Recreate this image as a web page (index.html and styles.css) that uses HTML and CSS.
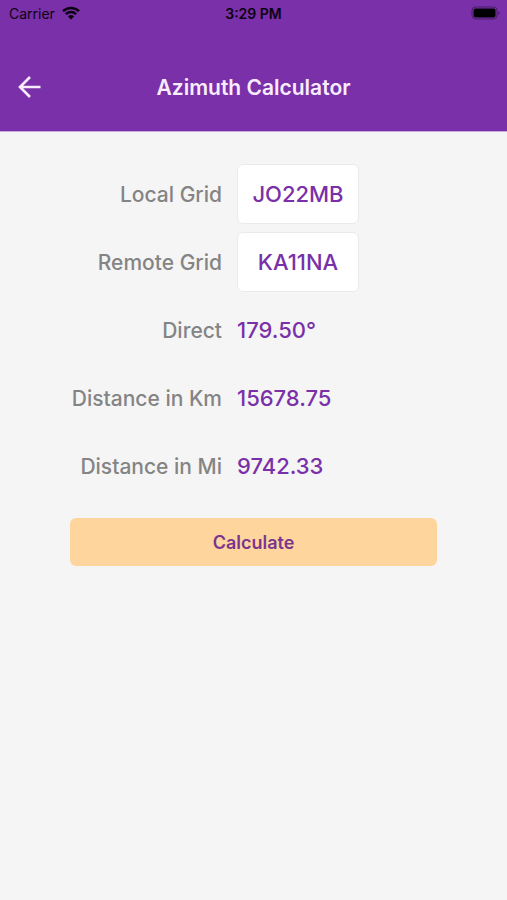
FILE: index.html
```html
<!DOCTYPE html>
<html lang="en">
<head>
<meta charset="utf-8">
<meta name="viewport" content="width=device-width, initial-scale=1">
<title>Azimuth Calculator</title>
<link rel="stylesheet" href="styles.css">
</head>
<body>
<header class="header">
  <div class="status">
    <div class="carrier">
      <span>Carrier</span>
      <svg class="wifi" viewBox="0 0 18 14" aria-hidden="true">
        <path d="M1 5.2a11.5 11.5 0 0 1 16 0M3.8 8.1a7.5 7.5 0 0 1 10.4 0" fill="none" stroke="currentColor" stroke-width="2.4"/>
        <path d="M9 13.6 5.9 10.5a4.5 4.5 0 0 1 6.2 0z" fill="currentColor"/>
      </svg>
    </div>
    <span class="time">3:29 PM</span>
    <svg class="battery" viewBox="0 0 30 14" aria-hidden="true">
      <rect x="1" y="1" width="25" height="12" rx="3.5" fill="none" stroke="currentColor" stroke-opacity=".4"/>
      <rect x="2.5" y="2.5" width="22" height="9" rx="2" fill="currentColor"/>
      <path d="M27.5 5.2a2 2 0 0 1 0 3.6z" fill="currentColor" fill-opacity=".5"/>
    </svg>
  </div>
  <nav class="nav">
    <a class="back" href="#" aria-label="Back">
      <svg viewBox="0 0 24 24" aria-hidden="true">
        <path d="M22.5 11H2M12 1 2 11l10 10" fill="none" stroke="currentColor" stroke-width="2.6"/>
      </svg>
    </a>
    <h1 class="title">Azimuth Calculator</h1>
  </nav>
</header>
<main class="main">
  <form class="form">
    <label class="label" for="local">Local Grid</label>
    <input class="field" id="local" type="text" value="JO22MB">
    <label class="label" for="remote">Remote Grid</label>
    <input class="field" id="remote" type="text" value="KA11NA">
    <label class="label" for="direct">Direct</label>
    <output class="value" id="direct">179.50°</output>
    <label class="label" for="km">Distance in Km</label>
    <output class="value" id="km">15678.75</output>
    <label class="label" for="mi">Distance in Mi</label>
    <output class="value" id="mi">9742.33</output>
    <button class="calculate" type="button">Calculate</button>
  </form>
</main>
</body>
</html>
```
FILE: styles.css
```css
* {
  box-sizing: border-box;
}

body {
  margin: 0;
  min-height: 100vh;
  background: #f5f5f5;
  font-family: Inter, "Liberation Sans", sans-serif;
}

.header {
  background: #7930a8;
  border-bottom: 1px solid #c9a8dd;
}

.status {
  display: grid;
  grid-template-columns: 1fr auto 1fr;
  align-items: center;
  height: 26px;
  padding: 0 6px;
  color: #0c0312;
  font-size: 14px;
}

.carrier {
  display: flex;
  align-items: center;
  gap: 7px;
  padding-left: 3px;
}

.wifi {
  width: 18px;
  height: 14px;
}

.time {
  font-weight: 600;
}

.battery {
  justify-self: end;
  width: 30px;
  height: 14px;
  color: #000;
}

.nav {
  display: grid;
  grid-template-columns: 1fr auto 1fr;
  align-items: center;
  height: 105px;
  padding: 18px 18px 0;
  color: #f8ecff;
}

.back {
  display: flex;
  color: inherit;
}

.back svg {
  width: 24px;
  height: 24px;
}

.title {
  margin: 0;
  font-size: 21px;
  font-weight: 600;
}

.main {
  padding: 32px 70px;
}

.form {
  display: grid;
  grid-template-columns: 19fr 25fr;
  grid-auto-rows: minmax(60px, auto);
  gap: 8px 15px;
  align-items: center;
}

.label {
  color: #848484;
  font-size: 21px;
  font-weight: 500;
  text-align: right;
  white-space: nowrap;
}

.field {
  width: 122px;
  height: 60px;
  padding: 0;
  border: 1px solid #ebebeb;
  border-radius: 6px;
  background: #fff;
  color: #7930a8;
  font: 500 22px Inter, "Liberation Sans", sans-serif;
  text-align: center;
}

.value {
  color: #7930a8;
  font-size: 22px;
  font-weight: 500;
}

.calculate {
  grid-column: 1 / -1;
  height: 48px;
  margin-top: 14px;
  border: 0;
  border-radius: 6px;
  background: #ffd59e;
  color: #7b358f;
  font: 600 18px Inter, "Liberation Sans", sans-serif;
}
```
